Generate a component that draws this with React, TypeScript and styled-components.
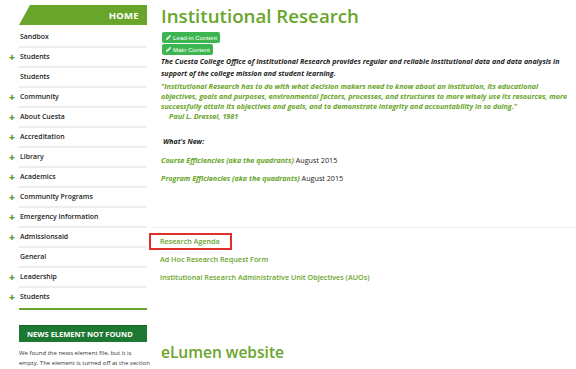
import * as React from 'react';
import styled, { createGlobalStyle } from 'styled-components';
import { FaPencilAlt } from 'react-icons/fa';

const GlobalStyle = createGlobalStyle`
    html, body {
        margin: 0;
        padding: 0;
        background: #fff;
        font-family: "Open Sans", "DejaVu Sans", sans-serif;
        overflow: hidden;
    }
`;

const navItems = [
    { label: 'Sandbox', plus: false },
    { label: 'Students', plus: true },
    { label: 'Students', plus: false },
    { label: 'Community', plus: true },
    { label: 'About Cuesta', plus: true },
    { label: 'Accreditation', plus: true },
    { label: 'Library', plus: true },
    { label: 'Academics', plus: true },
    { label: 'Community Programs', plus: true },
    { label: 'Emergency Information', plus: true },
    { label: 'Admissionsaid', plus: true },
    { label: 'General', plus: false },
    { label: 'Leadership', plus: true },
    { label: 'Students', plus: true },
];

export default function App() {
    return (
        <Page>
            <GlobalStyle />
            <Sidebar>
                <HomeBanner>HOME</HomeBanner>
                <NavList>
                    {navItems.map((item, i) => (
                        <NavItem key={i} last={i === navItems.length - 1}>
                            {item.plus && <Plus>+</Plus>}
                            {item.label}
                        </NavItem>
                    ))}
                </NavList>
                <NewsHeader>NEWS ELEMENT NOT FOUND</NewsHeader>
                <NewsText>
                    We found the news element file, but it is<br />
                    empty. The element is turned off at the section<br />
                    level and will not be displayed.
                </NewsText>
            </Sidebar>

            <Main>
                <Title>Institutional Research</Title>
                <EditButton><FaPencilAlt /> Lead-in Content</EditButton>
                <EditButton><FaPencilAlt /> Main Content</EditButton>
                <Intro>
                    The Cuesta College Office of Institutional Research provides regular and reliable institutional data and data analysis in<br />
                    support of the college mission and student learning.
                </Intro>
                <Quote>
                    "Institutional Research has to do with what decision makers need to know about an institution, its educational<br />
                    objectives, goals and purposes, environmental factors, processes, and structures to more wisely use its resources, more<br />
                    successfully attain its objectives and goals, and to demonstrate integrity and accountability in so doing."
                    <Author>Paul L. Dressel, 1981</Author>
                </Quote>
                <NewHeading>What's New:</NewHeading>
                <NewsLine><GreenEm>Course Efficiencies (aka the quadrants)</GreenEm> August 2015</NewsLine>
                <NewsLine><GreenEm>Program Efficiencies (aka the quadrants)</GreenEm> August 2015</NewsLine>

                <LinkBlock>
                    <LinkRow highlighted>Research Agenda</LinkRow>
                    <LinkRow>Ad Hoc Research Request Form</LinkRow>
                    <LinkRow>Institutional Research Administrative Unit Objectives (AUOs)</LinkRow>
                </LinkBlock>

                <SubTitle>eLumen website</SubTitle>
            </Main>
        </Page>
    );
}

const Page = styled.div`
    display: flex;
    width: 576px;
    height: 369px;
    overflow: hidden;
`;

const Sidebar = styled.aside`
    flex: 0 0 128px;
    min-width: 0;
    margin-left: 19px;
    padding-top: 5px;
`;

const HomeBanner = styled.div`
    height: 20px;
    background: #68a52a;
    clip-path: polygon(11px 0, 100% 0, 100% 100%, 0 100%);
    color: #fff;
    font-weight: 700;
    font-size: 9.5px;
    letter-spacing: 0.3px;
    display: flex;
    align-items: center;
    justify-content: flex-end;
    padding-right: 8px;
`;

const NavList = styled.ul`
    list-style: none;
    margin: 3px 0 0;
    padding: 0;
`;

const NavItem = styled.li<{ last?: boolean }>`
    position: relative;
    height: 18px;
    line-height: 18px;
    font-size: 6.9px;
    font-weight: 600;
    color: #222;
    border-bottom: 2px solid #eeeeee;
    padding-left: 1px;

    ${p => p.last && `
        border-bottom: none;
        height: 20px;
        margin-bottom: 2px;
        &::after {
            content: "";
            position: absolute;
            left: 0;
            right: 0;
            bottom: -2px;
            height: 2px;
            background: #68a52a;
        }
    `}
`;

const Plus = styled.span`
    position: absolute;
    left: -10px;
    top: 0;
    color: #5b9a2a;
    font-weight: 800;
    font-size: 10px;
`;

const NewsHeader = styled.div`
    margin-top: 17px;
    height: 16px;
    background: #1d7832;
    color: #fff;
    font-size: 7.5px;
    font-weight: 700;
    display: flex;
    align-items: center;
    padding-left: 8px;
    border-top: 1px solid #16652a;
`;

const NewsText = styled.p`
    margin: 6px 0 0;
    font-size: 6px;
    line-height: 10px;
    color: #333;
    white-space: nowrap;
`;

const Main = styled.main`
    flex: 1;
    min-width: 0;
    padding-left: 14px;
    display: flex;
    flex-direction: column;
    align-items: flex-start;
`;

const Title = styled.h1`
    margin: 0;
    font-size: 18.7px;
    line-height: 31px;
    font-weight: 600;
    color: #68a52a;
`;

const EditButton = styled.button`
    margin: 1px 0 0 1px;
    height: 11px;
    padding: 0 3px 0 4px;
    border: none;
    border-radius: 2px;
    background: #3db651;
    color: #fff;
    font-family: "Liberation Sans", Arial, sans-serif;
    font-size: 6.2px;
    display: inline-flex;
    align-items: center;
    gap: 2px;

    svg {
        width: 5px;
        height: 5px;
    }
`;

const Intro = styled.p`
    margin: 0;
    font-size: 7.1px;
    line-height: 12px;
    font-weight: 700;
    font-style: italic;
    color: #222;
    white-space: nowrap;
`;

const Quote = styled.p`
    margin: 2px 0 0;
    font-size: 7.2px;
    line-height: 10px;
    font-weight: 700;
    font-style: italic;
    color: #68a52a;
    white-space: nowrap;
`;

const Author = styled.span`
    display: block;
    padding-left: 8px;
`;

const NewHeading = styled.p`
    margin: 16px 0 0 2px;
    font-size: 7px;
    line-height: 10px;
    font-weight: 700;
    font-style: italic;
    color: #222;
`;

const NewsLine = styled.p`
    margin: 8px 0 0;
    font-size: 7.2px;
    line-height: 10px;
    color: #222;
`;

const GreenEm = styled.em`
    color: #68a52a;
    font-weight: 700;
`;

const LinkBlock = styled.div`
    align-self: stretch;
    margin: 44px 0 0 -11px;
    border-top: 1px solid #f0f0f0;
    padding-top: 6px;
    display: flex;
    flex-direction: column;
    gap: 3px;
`;

const LinkRow = styled.a<{ highlighted?: boolean }>`
    align-self: flex-start;
    font-size: 7.2px;
    font-weight: 600;
    color: #68a52a;
    line-height: 13px;
    padding: 0 10px 0 9px;
    border: 1px solid ${p => (p.highlighted ? '#e0302a' : 'transparent')};
    outline: ${p => (p.highlighted ? '0.5px solid #e0302a' : 'none')};
`;

const SubTitle = styled.h2`
    margin: 56px 0 0;
    font-size: 15.5px;
    font-weight: 600;
    color: #68a52a;
`;
